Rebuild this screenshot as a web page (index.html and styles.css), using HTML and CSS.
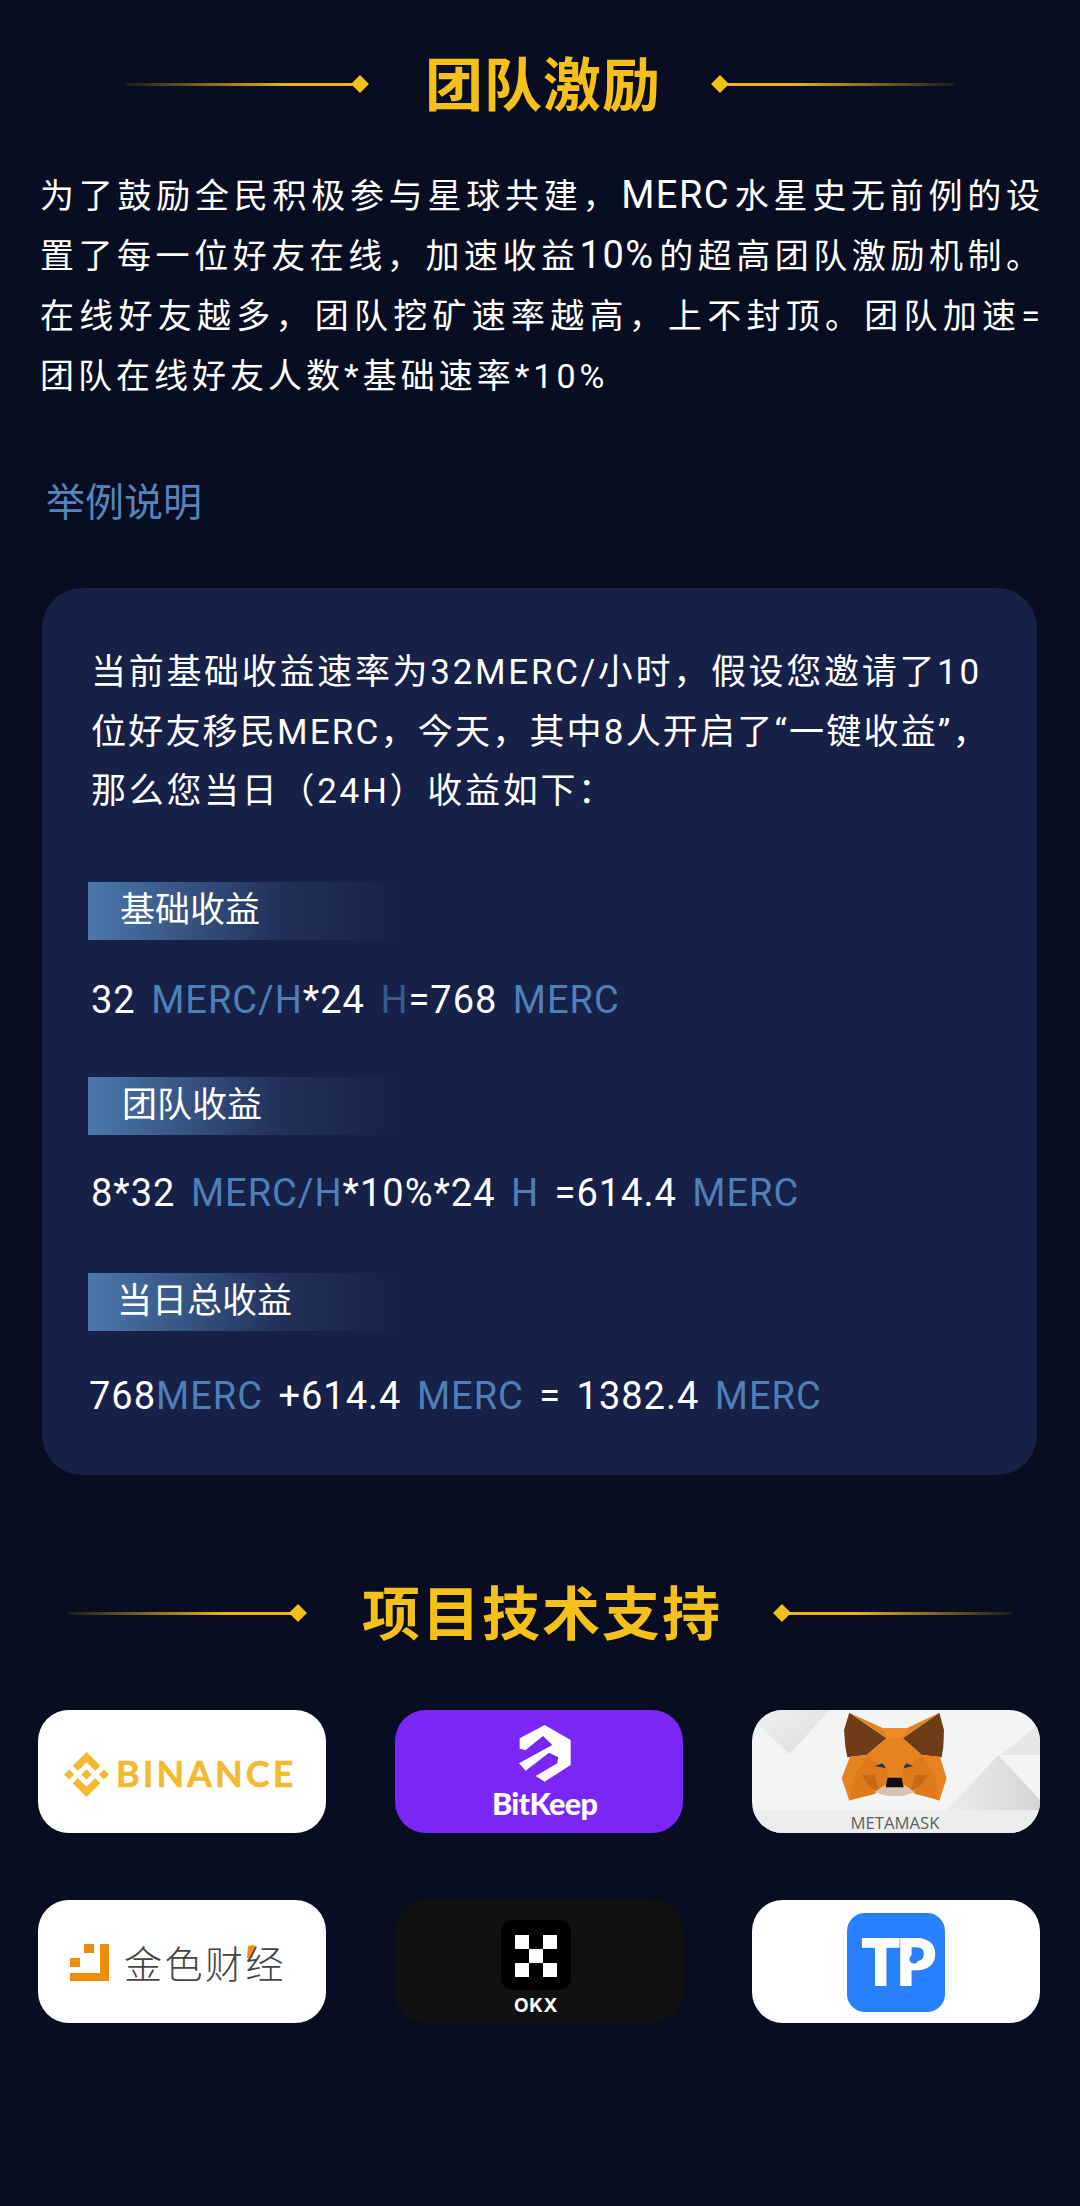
FILE: index.html
```html
<!DOCTYPE html>
<html lang="zh">
<head>
<meta charset="utf-8">
<title>团队激励</title>
<link rel="stylesheet" href="styles.css">
</head>
<body>
<main class="page">
  <header class="heading heading-first">
    <span class="deco deco-left"><i class="rule"></i><i class="gem"></i></span>
    <h1 class="heading-title">团队激励</h1>
    <span class="deco deco-right"><i class="gem"></i><i class="rule"></i></span>
  </header>

  <p class="intro">
    <span class="jl">为了鼓励全民积极参与星球共建，<span class="lat">MERC</span>水星史无前例的设</span>
    <span class="jl">置了每一位好友在线，加速收益<span class="lat">10%</span>的超高团队激励机制。</span>
    <span class="jl">在线好友越多，团队挖矿速率越高，上不封顶。团队加速=</span>
    <span class="ll">团队在线好友人数*基础速率*10%</span>
  </p>

  <h2 class="sub">举例说明</h2>

  <section class="card">
    <p class="card-text">
      <span class="cl">当前基础收益速率为32MERC/小时，假设您邀请了10</span>
      <span class="cl cl-tight">位好友移民MERC，今天，其中8人开启了“一键收益”，</span>
      <span class="cl">那么您当日（24H）收益如下：</span>
    </p>
    <div class="tag tag-a">基础收益</div>
    <div class="formula f-a">32 <b>MERC/H</b>*24 <b class="dim">H</b>=768 <b>MERC</b></div>
    <div class="tag tag-b">团队收益</div>
    <div class="formula f-b">8*32 <b>MERC/H</b>*10%*24 <b>H</b> =614.4 <b>MERC</b></div>
    <div class="tag tag-c">当日总收益</div>
    <div class="formula f-c">768<b>MERC</b> +614.4 <b>MERC</b> = 1382.4 <b>MERC</b></div>
  </section>

  <header class="heading heading-second">
    <span class="deco deco-left wide"><i class="rule"></i><i class="gem"></i></span>
    <h2 class="heading-title">项目技术支持</h2>
    <span class="deco deco-right wide"><i class="gem"></i><i class="rule"></i></span>
  </header>

  <section class="logos">
    <div class="tile tile-white">
      <svg class="logo" viewBox="0 0 288 123">
        <g transform="translate(26 42) scale(.3555)" fill="#f3ba2f">
          <path d="M38.73 53.2l24.59-24.58 24.6 24.6 14.3-14.31L63.32 0l-38.9 38.9zM0 63.31l14.3-14.31 14.31 14.31-14.31 14.3zM38.73 73.41l24.59 24.59 24.6-24.6 14.31 14.29-38.9 38.91-38.91-38.88-.02-.02zM98 63.31l14.3-14.3 14.31 14.3-14.31 14.3zM77.83 63.3L63.32 48.78 52.59 59.51l-1.24 1.23-2.54 2.54 14.51 14.5 14.51-14.47z"/>
        </g>
        <text class="t-binance" x="78" y="77">BINANCE</text>
      </svg>
    </div>
    <div class="tile tile-purple">
      <svg class="logo" viewBox="48 30 864 369">
        <path d="M497 75 L575 120 L575 195 L497 245 L470 228 L535 190 L538 172 L510 158 L440 212 L420 190 L520 135 L492 108 L440 150 L422 146 L422 115 Z" fill="#fff"/>
        <text class="t-bitkeep" x="497" y="346" text-anchor="middle">BitKeep</text>
      </svg>
    </div>
    <div class="tile tile-fox">
      <svg class="logo" viewBox="36 30 864 369">
        <defs>
          <linearGradient id="foxShadeA" x1="0" y1="0" x2="1" y2="1">
            <stop offset="0" stop-color="#eeefef"/>
            <stop offset="1" stop-color="#dcdddf"/>
          </linearGradient>
          <linearGradient id="foxShadeB" x1="0" y1="0" x2="1" y2="0">
            <stop offset="0" stop-color="#eceded"/>
            <stop offset="1" stop-color="#d2d4d6"/>
          </linearGradient>
        </defs>
        <polygon points="50,70 148,162 270,30 70,30" fill="url(#foxShadeA)"/>
        <polygon points="620,330 775,165 900,300 900,330" fill="url(#foxShadeB)"/>
        <polygon points="780,165 900,70 900,165" fill="#e6e7e8"/>
        <polygon points="36,330 900,330 900,399 36,399" fill="#eceded"/>
        <polygon points="328,38 440,115 380,165 322,172 316,140 312,90" fill="#6e3d18"/>
        <polygon points="598,38 488,115 545,165 605,172 610,140 612,90" fill="#6e3d18"/>
        <polygon points="328,38 430,85 500,85 598,38 488,115 545,165 600,170 620,235 598,302 525,276 490,255 440,255 402,276 328,302 305,235 330,170 380,165 440,115" fill="#e8811f"/>
        <polygon points="440,115 488,115 500,85 430,85" fill="#f08a24"/>
        <polygon points="380,170 440,205 445,235 405,282 330,300 345,225" fill="#df7a1c"/>
        <polygon points="548,170 490,205 485,235 525,282 598,300 585,225" fill="#df7a1c"/>
        <polygon points="365,225 405,225 415,270 390,262" fill="#c96a12"/>
        <polygon points="565,225 525,225 512,270 538,262" fill="#c96a12"/>
        <polygon points="402,276 438,258 490,258 525,276 490,288 440,288" fill="#d6c3b3"/>
        <polygon points="437,262 443,233 485,233 491,262" fill="#0d0d10"/>
        <polygon points="405,198 428,190 438,205" fill="#1d3a5c"/>
        <polygon points="520,198 498,190 490,205" fill="#1d3a5c"/>
        <text class="t-meta" x="465" y="388" text-anchor="middle">METAMASK</text>
      </svg>
    </div>
    <div class="tile tile-white">
      <svg class="logo" viewBox="0 0 288 123">
        <g fill="#f08e0c">
          <rect x="46" y="44" width="10" height="9"/>
          <rect x="32" y="58" width="10" height="9"/>
          <polygon points="62,44 71,44 71,81 32,81 32,73 62,73"/>
          <polygon points="210,46 217,45 214,58 209,58"/>
        </g>
        <text class="t-jinse" x="86" y="78">金色财经</text>
      </svg>
    </div>
    <div class="tile tile-black">
      <svg class="logo" viewBox="0 0 288 123">
        <rect x="106" y="20" width="70" height="70" rx="12" fill="#000"/>
        <g fill="#fff">
          <rect x="120" y="35" width="14" height="14"/>
          <rect x="148" y="35" width="14" height="14"/>
          <rect x="134" y="49" width="14" height="14"/>
          <rect x="120" y="63" width="14" height="14"/>
          <rect x="148" y="63" width="14" height="14"/>
        </g>
        <text class="t-okx" x="141" y="112" text-anchor="middle">OKX</text>
      </svg>
    </div>
    <div class="tile tile-white">
      <svg class="logo" viewBox="0 0 288 123">
        <rect x="95" y="13" width="98" height="99" rx="18" fill="#2980fe"/>
        <text class="t-tp" x="110" y="85">TP</text>
        <circle cx="162" cy="59" r="4.5" fill="#2980fe"/>
      </svg>
    </div>
  </section>
</main>
</body>
</html>
```

FILE: styles.css
```css
* { box-sizing: border-box; }
html, body { margin: 0; padding: 0; }
body {
  width: 1080px;
  height: 2206px;
  background: #080d21;
  color: #fff;
  font-family: Roboto, "Noto Sans CJK SC", sans-serif;
  overflow: hidden;
}
.page { width: 1080px; }
.heading {
  display: flex;
  align-items: center;
  justify-content: center;
  height: 60px;
}
.heading-first { padding-top: 54px; height: 114px; gap: 53px; }
.heading-second { margin-top: 108px; gap: 53px; }
.heading-title {
  margin: -6px -3px 0 3px;
  font-family: "Noto Sans CJK SC", sans-serif;
  font-size: 58px;
  line-height: 60px;
  font-weight: 700;
  letter-spacing: 1px;
  color: #f6c01b;
  white-space: nowrap;
}
.heading-second .heading-title { margin: -6px -2px 0 2px; letter-spacing: 2px; }
.deco { display: flex; align-items: center; width: 240px; }
.deco.wide { width: 236px; }
.rule { flex: 1; height: 3px; margin: 0 -4px; }
.deco-left .rule { background: linear-gradient(90deg, rgba(246,192,27,.08), #e9b31c 70%); }
.deco-right .rule { background: linear-gradient(90deg, #e9b31c 30%, rgba(246,192,27,.08)); }
.gem {
  width: 18px;
  height: 18px;
  background: #f6c01b;
  clip-path: polygon(50% 0, 100% 50%, 50% 100%, 0 50%);
}
.intro {
  margin: 52px 40px 0;
  width: 1000px;
  font-size: 34px;
  line-height: 60px;
}
.jl { display: block; text-align: justify; text-align-last: justify; white-space: nowrap; }
.ll { display: block; letter-spacing: 4px; white-space: nowrap; }
.lat { font-size: 38px; letter-spacing: 1.5px; line-height: 1; }
.sub {
  margin: 67px 0 0 46px;
  font-size: 39px;
  line-height: 60px;
  font-weight: 400;
  color: #5585bd;
}
.card {
  margin: 55px 0 0 42px;
  width: 995px;
  height: 887px;
  padding: 55px 0 0 49px;
  background: #172047;
  border-radius: 40px;
}
.card-text {
  margin: 0;
  font-size: 35px;
  line-height: 59.5px;
  letter-spacing: 2.7px;
}
.cl { display: block; white-space: nowrap; }
.cl-tight { letter-spacing: 2.2px; }
.tag {
  width: 320px;
  height: 58px;
  margin-left: -3px;
  padding-left: 32px;
  font-size: 35px;
  line-height: 58px;
  background: linear-gradient(90deg, #4c78ad, #223159 60%, rgba(23,32,71,0));
}
.tag-a { margin-top: 60.5px; }
.tag-b { margin-top: 47px; padding-left: 34px; }
.tag-c { margin-top: 50px; padding-left: 29px; }
.formula {
  font-size: 38px;
  line-height: 60px;
  white-space: nowrap;
  letter-spacing: 1px;
  word-spacing: 5px;
}
.formula b { font-weight: 400; color: #4f7fb9; }
.formula b.dim { color: #385a8e; }
.f-a { margin-top: 30px; }
.f-b { margin-top: 28px; }
.f-c { margin-top: 35px; margin-left: -2px; }
.logos {
  display: grid;
  grid-template-columns: repeat(3, 288px);
  grid-auto-rows: 123px;
  justify-content: space-between;
  row-gap: 67px;
  margin: 67px 40px 0 38px;
}
.tile { border-radius: 31px; overflow: hidden; }
.tile-white { background: #fff; }
.tile-purple { background: #7a26f7; }
.tile-black { background: #111; }
.tile-fox { background: #f3f4f4; }
.logo { display: block; width: 100%; height: 100%; }
.t-binance {
  font-family: Lato, sans-serif;
  font-size: 36px;
  font-weight: 700;
  letter-spacing: 3px;
  fill: #f3ba2f;
  stroke: #f3ba2f;
  stroke-width: .5px;
}
.t-bitkeep {
  font-family: Lato, sans-serif;
  font-size: 92px;
  font-weight: 900;
  letter-spacing: -2px;
  fill: #fff;
}
.t-meta {
  font-family: "Open Sans", sans-serif;
  font-size: 50px;
  fill: #5d5f63;
}
.t-jinse {
  font-family: "Noto Sans CJK SC", sans-serif;
  font-size: 38px;
  font-weight: 300;
  letter-spacing: 2.5px;
  fill: #444;
}
.t-okx {
  font-family: Inter, sans-serif;
  font-size: 19px;
  font-weight: 700;
  letter-spacing: .5px;
  fill: #fff;
}
.t-tp {
  font-family: Lato, sans-serif;
  font-size: 62px;
  font-weight: 900;
  letter-spacing: -3px;
  fill: #fff;
  stroke: #fff;
  stroke-width: 2px;
}
```
